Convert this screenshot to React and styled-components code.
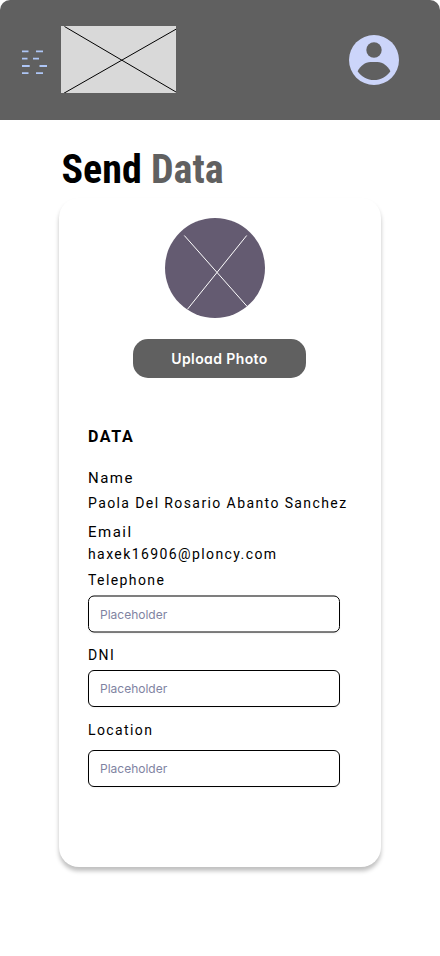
import React from "react";
import styled, { createGlobalStyle } from "styled-components";

const GlobalStyle = createGlobalStyle`
  *, *::before, *::after { box-sizing: border-box; }
  body { margin: 0; background: #fff; font-family: Roboto, "Liberation Sans", sans-serif; }
`;

const Page = styled.div`
  width: 440px;
  height: 956px;
  overflow: hidden;
  background: #fff;
`;

const Header = styled.header`
  height: 120px;
  padding: 0 41px 0 20px;
  display: flex;
  align-items: center;
  border-radius: 10px 10px 0 0;
  background: #606060;
`;

const Drawing = styled.svg`
  display: block;
  flex: none;
  margin: ${(p) => p.$margin || 0};
`;

const Title = styled.h1`
  margin: 25px 0 0 61.5px;
  height: 53px;
  width: max-content;
  font-size: 40px;
  line-height: 50px;
  font-weight: 700;
  font-stretch: 75%;
  color: #000;
`;

const Muted = styled.span`
  color: #606060;
`;

const Card = styled.main`
  width: 322px;
  height: 669px;
  margin-left: 59px;
  padding: 20px 29px 0;
  border-radius: 20px;
  background: #fff;
  box-shadow: 0 4px 4px rgba(0, 0, 0, 0.25);
`;

const Upload = styled.button`
  display: flex;
  align-items: center;
  justify-content: center;
  width: 173px;
  height: 39px;
  margin: 21px 0 0 45px;
  padding: 0;
  border: 0;
  border-radius: 15px;
  background: #606060;
  color: #fff;
  font: 600 14px/20px Inter, sans-serif;
  font-feature-settings: "cv11";
  letter-spacing: 0.4px;
  white-space: nowrap;
`;

const Line = styled.div`
  margin-top: ${(p) => p.$gap}px;
  height: 20px;
  line-height: 20px;
  font-size: ${(p) => p.$size || 14}px;
  font-weight: ${(p) => p.$weight || 400};
  letter-spacing: ${(p) => p.$track || 1.4}px;
  white-space: nowrap;
  color: #000;
`;

const Field = styled.input`
  display: block;
  width: 252px;
  height: 37px;
  margin-top: ${(p) => p.$gap}px;
  padding: 0 11px;
  border: 1px solid #000;
  border-radius: 6px;
  background: #fff;
  box-shadow: 0 1px 2px rgba(0, 0, 0, 0.05);
  font: 400 12px/18px Inter, sans-serif;
  transform: ${(p) => (p.$shift ? `translateY(${p.$shift}px)` : "none")};
  &::placeholder { color: #7f84a2; opacity: 1; }
`;

export default function App() {
  return (
    <Page>
      <GlobalStyle />
      <Header>
        <Drawing width="30" height="30" viewBox="20 47 30 30" $margin="4px 11px 0 0">
          <path
            d="M22 51.4h6.5M36 51.4h7M22 58.6h5.5M33 58.6h6M22 66h7.7M39.5 66h7.5M22 73.1h6.5M36 73.1h7"
            stroke="#aec6f6"
            strokeWidth="1.9"
          />
        </Drawing>
        <Drawing width="115" height="67" viewBox="61 26 115 67" $margin="0 0 1px">
          <path d="M61 26h115v67H61z" fill="#d9d9d9" />
          <path d="M64.5 26.5L176 92M64 93.2L176 29.2" stroke="#000" />
        </Drawing>
        <Drawing width="50" height="50" viewBox="349 35 50 50" $margin="0 0 0 auto">
          <circle cx="374" cy="60" r="25" fill="#ccd5fa" />
          <circle cx="374" cy="50" r="7.7" fill="#606060" />
          <path
            d="M357.6 71.2C360.5 66 365 62 370.5 62H377.5C383 62 387.5 66 390.4 71.2C386.5 77 380.5 80 374 80S361.5 77 357.6 71.2Z"
            fill="#606060"
          />
        </Drawing>
      </Header>
      <Title>
        Send <Muted>Data</Muted>
      </Title>
      <Card>
        <Drawing width="100" height="100" viewBox="165 218 100 100" $margin="0 0 0 77px">
          <circle cx="215" cy="268" r="50" fill="#645b71" />
          <path d="M184.3 235.5L247.2 306.5M246.7 235.5L187.5 309.2" stroke="#fff" />
        </Drawing>
        <Upload>Upload Photo</Upload>
        <Line $gap={49} $size={16} $weight={700} $track={1.6}>DATA</Line>
        <Line $gap={21} $size={15} $track={1.5}>Name</Line>
        <Line $gap={5}>Paola Del Rosario Abanto Sanchez</Line>
        <Line $gap={9} $size={15} $track={1.5}>Email</Line>
        <Line $gap={2}>haxek16906@ploncy.com</Line>
        <Line $gap={6}>Telephone</Line>
        <Field $gap={5} $shift={0.5} placeholder="Placeholder" />
        <Line $gap={13}>DNI</Line>
        <Field $gap={5} placeholder="Placeholder" />
        <Line $gap={13}>Location</Line>
        <Field $gap={10} placeholder="Placeholder" />
      </Card>
    </Page>
  );
}
